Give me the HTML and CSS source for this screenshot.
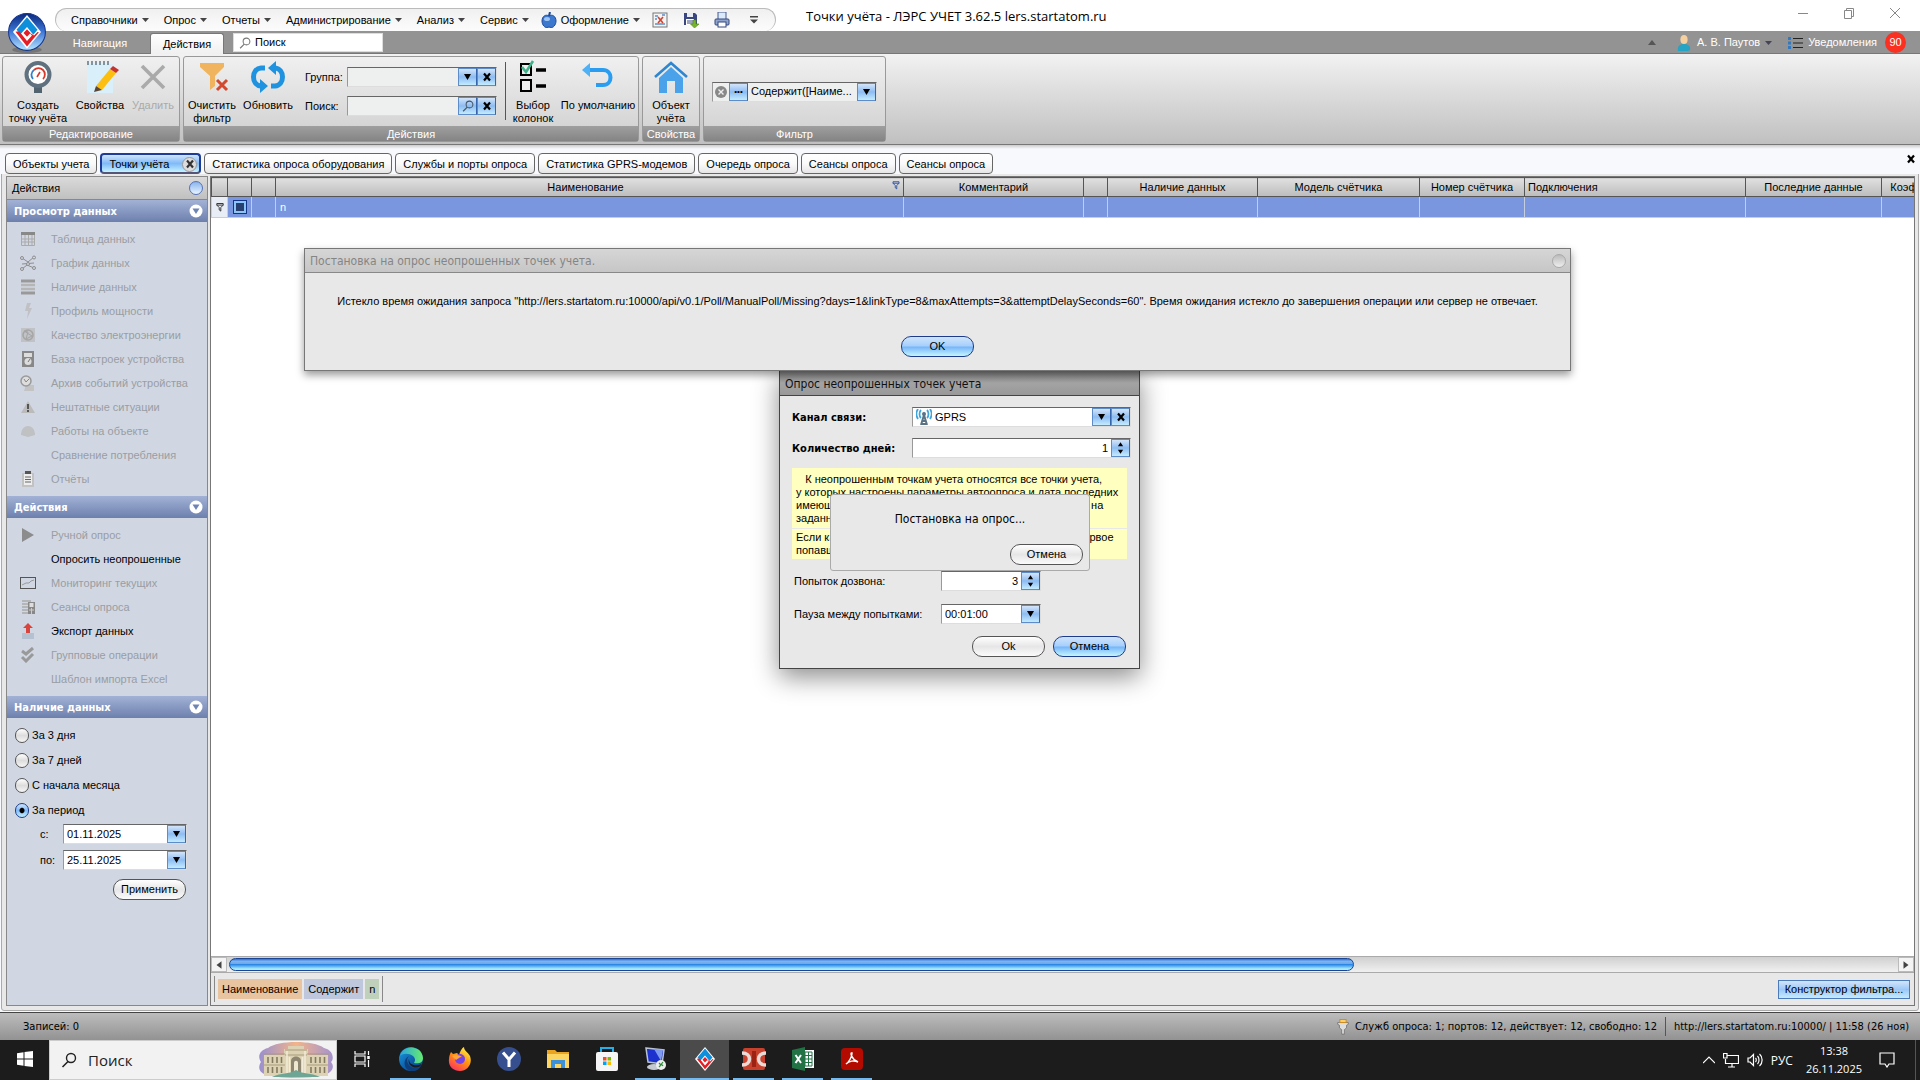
FILE: index.html
```
<!DOCTYPE html>
<html lang="ru">
<head>
<meta charset="utf-8">
	<title>Точки учёта - ЛЭРС УЧЕТ</title>
	<link rel="stylesheet" href="styles.css">
</head>
<body>
	<svg class="defs" aria-hidden="true">
		<defs>
			<linearGradient id="gBall" x1="0" y1="0" x2="0" y2="1">
				<stop offset="0" stop-color="#0a2a80"/><stop offset="0.5" stop-color="#3f78d8"/><stop offset="1" stop-color="#b8e6ff"/>
			</linearGradient>
			<linearGradient id="gEdge" x1="0" y1="0" x2="1" y2="1">
				<stop offset="0" stop-color="#1b9de2"/><stop offset="0.6" stop-color="#0c59a4"/><stop offset="1" stop-color="#114a8b"/>
			</linearGradient>
			<linearGradient id="gEdge2" x1="0" y1="0" x2="1" y2="0">
				<stop offset="0" stop-color="#2aa5dd"/><stop offset="1" stop-color="#66eb6e"/>
			</linearGradient>
			<linearGradient id="gFox" x1="0.8" y1="0" x2="0.2" y2="1">
				<stop offset="0" stop-color="#fff44f"/><stop offset="0.45" stop-color="#ff980e"/><stop offset="1" stop-color="#ff2d64"/>
			</linearGradient>
			<linearGradient id="gSky" x1="0" y1="0" x2="1" y2="0">
				<stop offset="0" stop-color="#9a8fd0"/><stop offset="0.5" stop-color="#f2b48a"/><stop offset="1" stop-color="#a493cf"/>
			</linearGradient>
			<symbol id="down" viewBox="0 0 10 6" preserveAspectRatio="none"><path d="M0 0H10L5 6Z"/></symbol>
			<symbol id="cross" viewBox="0 0 10 10"><path d="M2 1.500L8 8.500M8 1.500L2 8.500" fill="none" stroke="currentColor" stroke-width="2.200"/></symbol>
			<symbol id="loupe" viewBox="0 0 16 16"><circle cx="10" cy="6" r="4.500" fill="none" stroke="currentColor" stroke-width="1.400"/><path d="M7 9.500L1.500 15" stroke="currentColor" stroke-width="1.600"/></symbol>
			<symbol id="lers" viewBox="0 0 20 24">
				<path d="M10 0L20 12L10 24L0 12Z" fill="#fff"/>
				<path d="M10 1.500L17.500 10.500L14.500 14L10 8.500L5.500 13.500L2.500 10.500Z" fill="#0d8fdc"/>
				<path d="M1.800 11.800L4.500 11.500L10 18.500L13.500 14.500L10 10.500L12 12.500L15 14.500L17.500 12L18.500 12.300L10 22.300Z" fill="#e31e24"/>
				<path d="M10 10L12.500 12.800L10 15.500L7.500 12.800Z" fill="#e31e24"/>
			</symbol>
			<symbol id="updown" viewBox="0 0 8 13"><path d="M1 4.500L4 0L7 4.500ZM1 8.500H7L4 13Z"/></symbol>
			<symbol id="fold" viewBox="0 0 14 14"><circle cx="7" cy="7" r="6.500" fill="#fff"/><path d="M3.500 4.500H10.500L7 10Z" fill="#6f84b5"/></symbol>
			<symbol id="funnel" viewBox="0 0 10 12"><path d="M1 1H9V3L6 6V10.500L4 9V6L1 3ZM1 3H9" fill="none" stroke="currentColor" stroke-width="1.200"/></symbol>
		</defs>
	</svg>

	<header class="titlebar">
		<nav class="quick">
			<button class="menu-btn">Справочники <svg class="arr"><use href="#down"/></svg></button>
			<button class="menu-btn">Опрос <svg class="arr"><use href="#down"/></svg></button>
			<button class="menu-btn">Отчеты <svg class="arr"><use href="#down"/></svg></button>
			<button class="menu-btn">Администрирование <svg class="arr"><use href="#down"/></svg></button>
			<button class="menu-btn">Анализ <svg class="arr"><use href="#down"/></svg></button>
			<button class="menu-btn">Сервис <svg class="arr"><use href="#down"/></svg></button>
			<button class="menu-btn look">
				<svg class="ic16" viewBox="0 0 16 16"><path d="M8 4C5 2 1 4 1 9C1 13 4 16 6 15.500C7.500 15 8.500 15 10 15.500C12 16 15 13 15 9C15 4 11 2 8 4Z" fill="#3d78cf" stroke="#1f4a9a"/><path d="M8 4L9 0" stroke="#1f4a9a" stroke-width="2"/><ellipse cx="6" cy="7" rx="3" ry="2" fill="#9cc4f5"/></svg>
				Оформление <svg class="arr"><use href="#down"/></svg></button>
			<button class="tool-btn" title="Закрыть"><svg class="ic16" viewBox="0 0 16 16"><rect x="1" y="1" width="14" height="14" fill="#f4f4f4" stroke="#777"/><path d="M3 4H6M3 7H5M3 12H13M10 3H13" stroke="#5b8fc9" stroke-width="1.500"/><path d="M6 5L11 11M11 5L6 11" stroke="#d0432e" stroke-width="1.600"/></svg></button>
			<button class="tool-btn" title="Сохранить"><svg class="ic16" viewBox="0 0 16 16"><path d="M1 1H12L14 3V13H1Z" fill="#39467f"/><rect x="4" y="1" width="6" height="4" fill="#e8ecf7"/><rect x="3" y="7" width="8" height="6" fill="#fff"/><path d="M4 9H10M4 11H10" stroke="#39467f"/><path d="M10 8H13V12H16L11.500 16L7.500 12H10Z" fill="#76b52a" stroke="#4d8414" stroke-width="0.600"/></svg></button>
			<button class="tool-btn" title="Печать"><svg class="ic16" viewBox="0 0 16 16"><rect x="4" y="0" width="8" height="8" fill="#dce9fa" stroke="#44598f"/><rect x="1" y="7" width="14" height="6" rx="1" fill="#8fa5cd" stroke="#35497f"/><rect x="4" y="10" width="8" height="5" fill="#fff" stroke="#35497f"/></svg></button>
			<button class="tool-btn more" title="Настройка"><svg class="ic10" viewBox="0 0 10 8"><path d="M1 0H9V1.500H1ZM1 3.500H9L5 7.500Z" fill="#444"/></svg></button>
		</nav>
		<h1 class="caption">Точки учёта - ЛЭРС УЧЕТ 3.62.5 lers.startatom.ru</h1>
		<div class="win-btns">
			<button title="Свернуть"><svg viewBox="0 0 12 12"><path d="M1 6.500H11"/></svg></button>
			<button title="Окно"><svg viewBox="0 0 12 12"><path d="M1.500 3.500H8.500V11.500H1.500ZM3.500 3.500V1.500H10.500V9.500H8.500"/></svg></button>
			<button title="Закрыть"><svg viewBox="0 0 12 12"><path d="M1 1L11 11M11 1L1 11"/></svg></button>
		</div>
		<button class="logo" title="ЛЭРС УЧЕТ"><svg viewBox="0 0 36 38"><ellipse cx="18" cy="35" rx="14" ry="3" fill="#555" opacity="0.500"/><circle cx="18" cy="18" r="17.500" fill="url(#gBall)" stroke="#15348c"/><use href="#lers" x="2" y="2" width="32" height="32"/></svg></button>
	</header>

	<div class="pages">
		<button class="page">Навигация</button>
		<button class="page on">Действия</button>
		<label class="find"><svg class="ic12"><use href="#loupe"/></svg><input type="text" value="Поиск" aria-label="Поиск"></label>
		<div class="user">
			<button class="up" title="Свернуть ленту"><svg viewBox="0 0 8 5"><path d="M0 5L4 0L8 5Z" fill="#555"/></svg></button>
			<button class="who"><svg class="ic16" viewBox="0 0 14 16"><path d="M1 16C0 11 3 9 7 9S14 11 13 15C10 17 4 17 1 16Z" fill="#27a3c4"/><ellipse cx="7" cy="4.500" rx="3.600" ry="4.500" fill="#f6cf9f"/></svg> А. В. Паутов <svg class="arr"><use href="#down"/></svg></button>
			<button class="news"><svg class="ic16" viewBox="0 0 16 12"><path d="M6 1.500H16M6 6H16M6 10.500H16" stroke="#222" stroke-width="1.200"/><path d="M1 1.500H4M1 6H4M1 10.500H4" stroke="#3479bd" stroke-width="3"/></svg> Уведомления</button>
			<span class="badge">90</span>
		</div>
	</div>

	<section class="ribbon">
		<div class="group">
			<div class="cells">
				<button class="big w70"><svg viewBox="0 0 32 32"><path d="M12 24H20V32H12Z" fill="#51636f"/><circle cx="16" cy="13.500" r="11.500" fill="#fff" stroke="#5f707e" stroke-width="4"/><path d="M11 18A6 6 0 0 1 12 9" fill="none" stroke="#2f7fd0" stroke-width="1.800"/><path d="M12 9A6 6 0 0 1 21 18" fill="none" stroke="#d8392b" stroke-width="1.800"/><path d="M15 16L18 11" stroke="#d8392b" stroke-width="1.600"/></svg><span>Создать<br>точку учёта</span></button>
				<button class="big w54"><svg viewBox="0 0 32 32"><rect x="3" y="3" width="26" height="29" fill="#d9f0fb"/><path d="M4 0V4M8 0V4M12 0V4M16 0V4M20 0V4M24 0V4" stroke="#6b7d8c" stroke-width="1.600"/><path d="M12 25L26 8L32 12L18 29Z" fill="#fdbf0f"/><path d="M12 25L18 29L10 31Z" fill="#5a4636"/><path d="M26 8L29 5L35 9L32 12Z" fill="#c8322c"/></svg><span>Свойства</span></button>
				<button class="big w52" disabled><svg viewBox="0 0 32 32"><path d="M5 5L27 27M27 5L5 27" stroke="#aaa" stroke-width="3.600"/></svg><span>Удалить</span></button>
			</div>
			<h2>Редактирование</h2>
		</div>
		<div class="group">
			<div class="cells">
				<button class="big w56"><svg viewBox="0 0 32 32"><path d="M4 2H28V6L19 15V25L14 29V15L4 6Z" fill="#f0b45e"/><path d="M21 19L31 29M31 19L21 29" stroke="#d2492e" stroke-width="3"/></svg><span>Очистить фильтр</span></button>
				<button class="big w56"><svg viewBox="0 0 32 32"><path d="M13 7H9C-1 8 -1 24 9 25M19 25H23C33 24 33 8 23 7" fill="none" stroke="#2093e0" stroke-width="5"/><path d="M8 18V32L16 25ZM24 0V14L16 7Z" fill="#2093e0"/></svg><span>Обновить</span></button>
				<div class="fields">
					<label for="grp">Группа:</label>
					<div class="combo flat"><select id="grp"><option></option></select><span class="b"><svg class="arr"><use href="#down"/></svg></span><button class="b" title="Очистить"><svg class="ic10"><use href="#cross"/></svg></button></div>
					<label for="srch">Поиск:</label>
					<div class="combo flat"><input id="srch" type="text"><button class="b dim" title="Найти"><svg class="ic12"><use href="#loupe"/></svg></button><button class="b" title="Очистить"><svg class="ic10"><use href="#cross"/></svg></button></div>
				</div>
				<hr>
				<button class="big w50"><svg viewBox="0 0 32 32"><path d="M4 3H14V14H4ZM4 19H14V30H4Z" fill="#eee" stroke="#000" stroke-width="2"/><path d="M19 9H29M19 25H29" stroke="#000" stroke-width="3.500"/><path d="M5 6L9 11L16 0" fill="none" stroke="#3fb28c" stroke-width="2.600"/></svg><span>Выбор колонок</span></button>
				<button class="big w80"><svg viewBox="0 0 32 32"><path d="M5 9H21C31 9 31 24 21 24H14" fill="none" stroke="#2a9df0" stroke-width="4"/><path d="M0 9L8 2V16Z" fill="#4eb0f5"/></svg><span>По умолчанию</span></button>
			</div>
			<h2>Действия</h2>
		</div>
		<div class="group">
			<div class="cells">
				<button class="big w56"><svg viewBox="0 0 32 32"><path d="M16 6L28 17V32H20V20H12V32H4V17Z" fill="#4aa3ea"/><path d="M0 16L16 2L32 16" fill="none" stroke="#2f86d0" stroke-width="2.600"/></svg><span>Объект учёта</span></button>
			</div>
			<h2>Свойства</h2>
		</div>
		<div class="group">
			<div class="cells filter-cell">
				<div class="combo flat"><button class="clr" title="Сбросить"><svg class="ic12" viewBox="0 0 12 12"><circle cx="6" cy="6" r="6" fill="#888"/><path d="M3.500 3.500L8.500 8.500M8.500 3.500L3.500 8.500" stroke="#eee" stroke-width="1.400"/></svg></button><button class="b" title="Изменить">•••</button><select aria-label="Фильтр"><option>Содержит([Наиме...</option></select><span class="b"><svg class="arr"><use href="#down"/></svg></span></div>
			</div>
			<h2>Фильтр</h2>
		</div>
	</section>

	<div class="tabs">
		<button class="tab">Объекты учета</button>
		<div class="tab on"><button>Точки учёта</button><button class="x" title="Закрыть"><svg class="ic10"><use href="#cross"/></svg></button></div>
		<button class="tab">Статистика опроса оборудования</button>
		<button class="tab">Службы и порты опроса</button>
		<button class="tab">Статистика GPRS-модемов</button>
		<button class="tab">Очередь опроса</button>
		<button class="tab">Сеансы опроса</button>
		<button class="tab">Сеансы опроса</button>
		<button class="close-all" title="Закрыть"><svg class="ic10"><use href="#cross"/></svg></button>
	</div>

	<main class="frame">
		<aside class="side">
			<div class="side-head">Действия <button title="Скрыть панель"></button></div>

			<h3>Просмотр данных <button title="Свернуть"><svg><use href="#fold"/></svg></button></h3>
			<div class="list">
				<button class="item" disabled><svg viewBox="0 0 16 16"><path d="M1.500 4V14.500H14.500V4M1 8H15M1 11H15M5 4V14M8.500 4V14M12 4V14" fill="none" stroke="#aaa"/><path d="M1 1H15V4H1Z" fill="#888"/></svg>Таблица данных</button>
				<button class="item" disabled><svg viewBox="0 0 16 16"><path d="M2 3L8 7L14 2M2 14L7 10L14 13M2 9L14 8" fill="none" stroke="#8d8d8d"/><g fill="#d0d7e3" stroke="#8d8d8d"><circle cx="2" cy="3" r="1.500"/><circle cx="14" cy="2.500" r="1.500"/><circle cx="2" cy="14" r="1.500"/><circle cx="14" cy="13" r="1.500"/><circle cx="8" cy="9" r="1.500"/></g></svg>График данных</button>
				<button class="item" disabled><svg viewBox="0 0 16 16"><path d="M1 2H15M1 14H15" stroke="#999" stroke-width="3"/><path d="M1 6H15M1 10H15" stroke="#b5b5b5" stroke-width="2.500"/></svg>Наличие данных</button>
				<button class="item" disabled><svg viewBox="0 0 16 16"><path d="M7 0H11L9 5H12L7 16L8 8H5Z" fill="#bfc1c4"/></svg>Профиль мощности</button>
				<button class="item" disabled><svg viewBox="0 0 16 16"><rect x="1" y="1" width="14" height="14" fill="#c0c2c5"/><circle cx="8" cy="8" r="5" fill="none" stroke="#a5a5a5" stroke-width="1.500"/><path d="M4 4L12 9L6 12L8 5Z" fill="none" stroke="#a5a5a5"/></svg>Качество электроэнергии</button>
				<button class="item" disabled><svg viewBox="0 0 16 16"><rect x="2" y="0" width="12" height="16" fill="#888"/><rect x="4" y="2" width="8" height="4" fill="#ddd"/><circle cx="8" cy="10.500" r="3.500" fill="#ddd"/><path d="M8 11L10 8" stroke="#777"/></svg>База настроек устройства</button>
				<button class="item" disabled><svg viewBox="0 0 16 16"><path d="M6 10H14V16H4Z" fill="#c3c3c3"/><circle cx="6" cy="6" r="5" fill="#ddd" stroke="#999" stroke-width="1.500"/><path d="M4 4L6 7L9 4" fill="none" stroke="#888"/></svg>Архив событий устройства</button>
				<button class="item" disabled><svg viewBox="0 0 16 16"><path d="M8 2L15 14H1Z" fill="#bbb"/><path d="M8 5V10M8 11V13" stroke="#555" stroke-width="2"/></svg>Нештатные ситуации</button>
				<button class="item" disabled><svg viewBox="0 0 16 16"><path d="M1 12C1 0 15 0 15 12L8 14Z" fill="#c0c1c3"/></svg>Работы на объекте</button>
				<button class="item" disabled><svg viewBox="0 0 16 16"></svg>Сравнение потребления</button>
				<button class="item" disabled><svg viewBox="0 0 16 16"><rect x="2" y="2" width="12" height="14" fill="#c2c2c2"/><rect x="4" y="3" width="8" height="11" fill="#eee"/><path d="M5 0H11V3H5Z" fill="#555"/><path d="M5 6H11M5 8.500H11M5 11H11" stroke="#666"/></svg>Отчёты</button>
			</div>

			<h3>Действия <button title="Свернуть"><svg><use href="#fold"/></svg></button></h3>
			<div class="list">
				<button class="item" disabled><svg viewBox="0 0 16 16"><path d="M2 1L14 8L2 15Z" fill="#8c8c8c"/></svg>Ручной опрос</button>
				<button class="item"><svg viewBox="0 0 16 16"></svg>Опросить неопрошенные</button>
				<button class="item" disabled><svg viewBox="0 0 16 16"><rect x="0.500" y="2.500" width="15" height="11" fill="none" stroke="#555"/><path d="M2 10L6 8L9 8L11 6L14 5" fill="none" stroke="#999"/></svg>Мониторинг текущих</button>
				<button class="item" disabled><svg viewBox="0 0 16 16"><path d="M2 2H11M2 5H8M2 8H8M2 11H8M2 14H8" stroke="#aaa" stroke-width="1.500"/><rect x="8" y="3" width="7" height="12" fill="#888"/><rect x="9.500" y="4" width="4" height="4" fill="#ddd"/><path d="M9 11H14M11.500 9V15" stroke="#ccc"/></svg>Сеансы опроса</button>
				<button class="item"><svg viewBox="0 0 16 16"><rect x="2" y="10" width="12" height="6" fill="#b4c1d0"/><path d="M6 10V5H3L8 0L13 5H10V10Z" fill="#d9443c"/></svg>Экспорт данных</button>
				<button class="item" disabled><svg viewBox="0 0 16 16"><path d="M2 4L6 7L13 1M2 10L6 14L13 7" fill="none" stroke="#999" stroke-width="3"/></svg>Групповые операции</button>
				<button class="item" disabled><svg viewBox="0 0 16 16"></svg>Шаблон импорта Excel</button>
			</div>

			<h3>Наличие данных <button title="Свернуть"><svg><use href="#fold"/></svg></button></h3>
			<div class="list">
				<label class="rad"><input type="radio" name="per">За 3 дня</label>
				<label class="rad"><input type="radio" name="per">За 7 дней</label>
				<label class="rad"><input type="radio" name="per">С начала месяца</label>
				<label class="rad"><input type="radio" name="per" checked>За период</label>
				<div class="date"><label for="d1">с:</label><div class="combo"><input id="d1" type="text" value="01.11.2025"><button class="b" title="Календарь"><svg class="arr"><use href="#down"/></svg></button></div></div>
				<div class="date"><label for="d2">по:</label><div class="combo"><input id="d2" type="text" value="25.11.2025"><button class="b" title="Календарь"><svg class="arr"><use href="#down"/></svg></button></div></div>
				<button class="pill apply">Применить</button>
			</div>
		</aside>

		<section class="grid">
			<div class="rows">
				<table>
					<colgroup>
						<col class="c16"><col class="c24"><col class="c24"><col class="c628"><col class="c180"><col class="c24"><col class="c150"><col class="c162"><col class="c105"><col class="c221"><col class="c136"><col class="c60">
					</colgroup>
					<thead>
						<tr>
							<th></th><th></th><th></th>
							<th>Наименование<svg class="mark"><use href="#funnel"/></svg></th>
							<th>Комментарий</th>
							<th></th>
							<th>Наличие данных</th>
							<th>Модель счётчика</th>
							<th>Номер счётчика</th>
							<th class="left">Подключения</th>
							<th>Последние данные</th>
							<th>Коэффи</th>
						</tr>
					</thead>
					<tbody>
						<tr>
							<td class="ind"><svg><use href="#funnel"/></svg></td>
							<td class="chk"><input type="checkbox" aria-label="Отбор"></td>
							<td></td>
							<td>n</td>
							<td></td><td></td><td></td><td></td><td></td><td></td><td></td><td></td>
						</tr>
					</tbody>
				</table>
			</div>
			<div class="scroll">
				<button title="Влево"><svg viewBox="0 0 6 8"><path d="M5 1V7L1 4Z"/></svg></button>
				<div class="track"><div class="thumb"></div></div>
				<button title="Вправо"><svg viewBox="0 0 6 8"><path d="M1 1V7L5 4Z"/></svg></button>
			</div>
			<div class="expr">
				<div class="cond"><span class="f">Наименование</span><span class="o">Содержит</span><span class="v">n</span></div>
				<button class="builder">Конструктор фильтра...</button>
			</div>
		</section>
	</main>

	<footer class="status">
		<span>Записей: 0</span>
		<span class="srv"><svg class="ic16" viewBox="0 0 16 18"><path d="M2 4H14V6L12 7V10L9.500 12V17H6.500V12L4 10V7L2 6Z" fill="#ddd" stroke="#777"/><rect x="4.500" y="0.500" width="7" height="3.500" fill="#fbd06c" stroke="#c98a22"/></svg> Служб опроса: 1; портов: 12, действует: 12, свободно: 12</span>
		<span class="url">http://lers.startatom.ru:10000/ | 11:58 (26 ноя)</span>
	</footer>

	<div class="taskbar">
		<button class="app" title="Пуск"><svg viewBox="0 0 16 16"><path d="M0 2.200L6.500 1.300V7.500H0ZM7.500 1.100L16 0V7.500H7.500ZM0 8.500H6.500V14.700L0 13.800ZM7.500 8.500H16V16L7.500 14.900Z" fill="#fff"/></svg></button>
		<label class="tsearch"><svg class="ic16"><use href="#loupe"/></svg><input type="text" value="Поиск" aria-label="Поиск Windows">
			<svg class="palace" viewBox="0 0 76 36"><path d="M10 6C20 -2 56 -2 66 6C76 8 76 18 73 20C78 26 72 32 66 33C50 37 24 37 10 33C2 32 -1 26 3 20C-1 14 2 8 10 6Z" fill="url(#gSky)"/><path d="M6 13H26V7H30V4H46V7H50V13H70V34H6Z" fill="#ddd3b4"/><path d="M5 12H27M49 12H71M27 8H49M27 13H49M6 23H27M49 23H70" stroke="#a79b78" stroke-width="1"/><path d="M33 33V19C33 13 43 13 43 19V33Z" fill="#8e8670"/><path d="M36 30V21C36 18 40 18 40 21V30Z" fill="#efe8d0"/><path d="M10 15V21M14.500 15V21M19 15V21M23.500 15V21M53 15V21M57.500 15V21M62 15V21M66.500 15V21M10 25V31M14.500 25V31M19 25V31M23.500 25V31M53 25V31M57.500 25V31M62 25V31M66.500 25V31" stroke="#837a60" stroke-width="1.600"/><path d="M29 9V33M47 9V33M31.500 15V33M44.500 15V33" stroke="#f2ecd8" stroke-width="1.500"/><path d="M14 35C24 30 30 33 38 28C46 33 52 30 62 35Z" fill="#6fa595"/></svg>
		</label>
		<button class="app" title="Представление задач"><svg viewBox="0 0 16 16" fill="none" stroke="#fff" stroke-width="1.200"><path d="M1 0V3H11V0M1 16V13H11V16M1 5H11V11H1ZM14.500 0V4M14.500 9V16"/><path d="M14.500 5V8" stroke-width="2.500"/></svg></button>
		<button class="app run" title="Edge"><svg class="l" viewBox="0 0 24 24"><circle cx="12" cy="12" r="12" fill="url(#gEdge)"/><path d="M1 9C4 -3 23 -2 24 11C24 16 19 17 15 16C16 14 17 12 14 9C10 6 4 6 1 9Z" fill="url(#gEdge2)"/><path d="M10 9C6 13 9 20 15 21C18 21.500 20 21 22 19C18 26 10 25 7 21C4 16 6 11 10 9Z" fill="#0e3f7c"/><path d="M10 12C10 17 14 19 20 18L22.500 17C21 21 17 21 14 20C10 18 9 15 10 12Z" fill="#1c1c1c"/></svg></button>
		<button class="app" title="Firefox"><svg class="l" viewBox="0 0 24 24"><path d="M3 5L5 7L9 6L11 8C12 4 14 1 16 0C16 4 20 5 22 9C25 17 19 24 12 24C5 24 0 19 1 12C1 9 2 7 3 5Z" fill="url(#gFox)"/><circle cx="12" cy="12" r="5" fill="#7542e5"/><path d="M4 9C8 7 12 8 14 10C11 10 10 12 8 13Z" fill="#ffa436"/></svg></button>
		<button class="app" title="Яндекс"><svg class="l" viewBox="0 0 24 24"><circle cx="12" cy="12" r="12" fill="#36508f"/><path d="M6 5.500L12 12.500L18 5.500M12 12V20" fill="none" stroke="#fff" stroke-width="3"/></svg></button>
		<button class="app" title="Проводник"><svg class="l" viewBox="0 0 24 24"><path d="M1 3H9L11 5H23V21H1Z" fill="#e9a522"/><path d="M1 7H23V21H1Z" fill="#fcd462"/><path d="M5 21V13H19V21H15V17H9V21Z" fill="#3c91d9"/></svg></button>
		<button class="app" title="Магазин"><svg class="l" viewBox="0 0 24 24"><path d="M6 6V1H18V6" fill="none" stroke="#22b0ea" stroke-width="2"/><rect x="1" y="5" width="22" height="19" rx="2" fill="#f5f5f5"/><path d="M8 10H11.500V13.500H8Z" fill="#f25022"/><path d="M12.500 10H16V13.500H12.500Z" fill="#7fba00"/><path d="M8 14.500H11.500V18H8Z" fill="#00a4ef"/><path d="M12.500 14.500H16V18H12.500Z" fill="#ffb900"/></svg></button>
		<button class="app run" title="Удаленный рабочий стол"><svg class="l" viewBox="0 0 24 24"><path d="M2 1L20 3L18 17L4 15Z" fill="#1d31cf" stroke="#b9c3d6" stroke-width="1.500"/><path d="M10 2L19 3L17 14Z" fill="#7f9bf0"/><ellipse cx="10" cy="20" rx="7" ry="3" fill="#c5cad2"/><circle cx="17" cy="18" r="5" fill="#eee"/><path d="M15 16L17 18L15 20M19 15L17.500 17L19 19" fill="none" stroke="#2b8c38" stroke-width="1.200"/></svg></button>
		<button class="app run cur" title="ЛЭРС УЧЕТ"><svg class="l"><use href="#lers"/></svg></button>
		<button class="app run" title="DC"><svg class="l" viewBox="0 0 24 24"><rect x="1" y="1" width="22" height="22" rx="2" fill="#c8412d"/><path d="M12 4V20" stroke="#9c2213" stroke-width="4"/><path d="M0 6C10 6 10 18 0 18M24 6C14 6 14 18 24 18" fill="none" stroke="#e9dcd8" stroke-width="3.500"/></svg></button>
		<button class="app run" title="Excel"><svg class="l" viewBox="0 0 24 24"><rect x="12" y="3" width="11" height="18" fill="#fff"/><path d="M14 5H21V19H14ZM14 8.500H21M14 12H21M14 15.500H21M17.500 5V19" fill="none" stroke="#217346"/><path d="M1 3L14 0V24L1 21Z" fill="#217346"/><path d="M4.500 8L10 16M10 8L4.500 16" stroke="#fff" stroke-width="2"/></svg></button>
		<button class="app run" title="Acrobat"><svg class="l" viewBox="0 0 24 24"><rect x="1" y="1" width="22" height="22" rx="4" fill="#b30b00"/><path d="M6 17C9 15 12 10 12 6C10 5 11 12 18 15C14 13 9 14 6 17Z" fill="none" stroke="#fff" stroke-width="1.500"/></svg></button>
		<div class="tray">
			<svg class="ic12" viewBox="0 0 12 12"><path d="M0 9L6 3L12 9"/></svg>
			<svg class="ic16" viewBox="0 0 16 16"><path d="M4 3.500H15.500V11.500H2.500V7M0.500 1.500H4V6H0.500ZM9 12V15M5 15H12"/></svg>
			<svg class="ic16" viewBox="0 0 16 16"><path d="M1 6H3L6.500 2.500V13.500L3 10H1ZM8.500 6C9.500 7 9.500 9 8.500 10M10.500 4C12.500 6 12.500 10 10.500 12M12.500 2C16 5 16 11 12.500 14"/></svg>
			<span>РУС</span>
			<div class="clock">13:38<br>26.11.2025</div>
			<svg class="ic16" viewBox="0 0 16 16"><path d="M1 1H15V12H10L8 15L6 12H1Z"/></svg>
		</div>
	</div>

	<section class="win params" role="dialog" aria-labelledby="t1">
		<h2 id="t1">Опрос неопрошенных точек учета</h2>
		<div class="form">
			<label class="bold" for="chan">Канал связи:</label>
			<div class="combo">
				<svg class="ic16" viewBox="0 0 16 16"><path d="M5 16L8 6L11 16M6 12H10M5 15H11" fill="none" stroke="#5a7285" stroke-width="2"/><circle cx="8" cy="5" r="2" fill="#5a7285"/><path d="M5 1C3 3 3 7 5 9M2 0C0 3 0 7 2 10M11 1C13 3 13 7 11 9M14 0C16 3 16 7 14 10" fill="none" stroke="#3fa3dc" stroke-width="1.800"/></svg>
				<select id="chan"><option>GPRS</option></select><span class="b"><svg class="arr"><use href="#down"/></svg></span><button class="b" title="Очистить"><svg class="ic10"><use href="#cross"/></svg></button>
			</div>
			<label class="bold" for="days">Количество дней:</label>
			<div class="combo num"><input id="days" type="text" value="1"><button class="b" title="Изменить"><svg class="ud"><use href="#updown"/></svg></button></div>
		</div>
		<div class="hint">
			<p>&nbsp;&nbsp; К неопрошенным точкам учета относятся все точки учета,<br>у которых настроены параметры автоопроса и дата последних<br>имеющихся данных отстают от текущей даты более, чем на<br>заданное количество дней.</p>
			<p>Если канал связи не выбран, то будет использоваться первое<br>попавшееся подключение.</p>
		</div>
		<div class="form small">
			<label for="tries">Попыток дозвона:</label>
			<div class="combo num"><input id="tries" type="text" value="3"><button class="b" title="Изменить"><svg class="ud"><use href="#updown"/></svg></button></div>
			<label for="pause">Пауза между попытками:</label>
			<div class="combo"><input id="pause" type="text" value="00:01:00"><button class="b" title="Выбрать"><svg class="arr"><use href="#down"/></svg></button></div>
		</div>
		<div class="btns"><button class="pill">Ok</button><button class="pill blue">Отмена</button></div>
		<div class="wait">
			<p>Постановка на опрос...</p>
			<button class="pill">Отмена</button>
		</div>
	</section>

	<section class="win error" role="alertdialog" aria-labelledby="t2">
		<h2 id="t2">Постановка на опрос неопрошенных точек учета. <button class="ball" title="Закрыть"></button></h2>
		<p>Истекло время ожидания запроса "http://lers.startatom.ru:10000/api/v0.1/Poll/ManualPoll/Missing?days=1&amp;linkType=8&amp;maxAttempts=3&amp;attemptDelaySeconds=60". Время ожидания истекло до завершения операции или сервер не отвечает.</p>
		<button class="pill blue">OK</button>
	</section>
</body>
</html>
```
FILE: styles.css
```
*{
	box-sizing: border-box;
}
body{
	margin: 0px;
	height: 100vh;
	display: flex;
	flex-direction: column;
	overflow: hidden;
	position: relative;
	background-color: #f8f9fc;
	color: #000;
	font-family: "Liberation Sans", Arial, sans-serif;
	font-size: 11px;
	line-height: 13px;
}
button, input, select{
	font: inherit;
	color: inherit;
	margin: 0px;
	padding: 0px;
	border: 0px;
	background: none;
}
h1, h2, h3, p{
	margin: 0px;
	font-size: inherit;
	font-weight: normal;
}
svg{
	flex: none;
}
.defs{
	position: absolute;
	width: 0px;
	height: 0px;
}
.ic16{
	width: 16px;
	height: 16px;
}
.ic12{
	width: 12px;
	height: 12px;
}
.ic10{
	width: 10px;
	height: 10px;
}
.arr{
	width: 7px;
	height: 4px;
}

/* title bar */
.titlebar{
	display: flex;
	height: 31px;
	padding-left: 55px;
	background-color: #fff;
	position: relative;
}
.quick{
	display: flex;
	align-items: center;
	height: 23px;
	width: 721px;
	margin-top: 8px;
	padding: 0px 15px;
	border: 1px solid #bbb;
	border-bottom: 0px;
	border-radius: 14px;
	background: linear-gradient(#f0f0f0, #fcfcfc);
}
.menu-btn{
	display: flex;
	align-items: center;
	gap: 4px;
	margin-right: 15px;
	white-space: nowrap;
}
.menu-btn .arr{
	fill: #444;
}
.quick .look{
	margin: 0px 12px 0px -3px;
}
.tool-btn{
	display: flex;
	width: 16px;
	margin-right: 15px;
}
.more{
	margin: 0px 0px 0px 4px;
}
.caption{
	margin: 5px 0px 0px 30px;
	font-family: "Open Sans", "Noto Sans", sans-serif;
	font-size: 13px;
	line-height: 22px;
}
.win-btns{
	display: flex;
	margin-left: auto;
	margin-right: 2px;
}
.win-btns button{
	width: 46px;
	height: 28px;
}
.win-btns svg{
	width: 12px;
	height: 12px;
	fill: none;
	stroke: #888;
}
.logo{
	position: absolute;
	left: 8px;
	top: 13px;
	width: 38px;
	height: 40px;
}
.logo svg{
	width: 38px;
	height: 40px;
}

/* ribbon */
.pages{
	display: flex;
	align-items: flex-end;
	height: 23px;
	padding-left: 50px;
	background-color: #939393;
	border-bottom: 1px solid #777;
	color: #fff;
}
.page{
	width: 100px;
	height: 20px;
}
.page.on{
	width: 74px;
	height: 21px;
	margin-bottom: -1px;
	border: 1px solid #777;
	border-bottom: 0px;
	border-radius: 3px 3px 0px 0px;
	background: linear-gradient(#fff, #f0f0f0);
	color: #000;
}
.find{
	display: flex;
	align-items: center;
	gap: 4px;
	width: 150px;
	height: 19px;
	margin: 0px 0px 1px 9px;
	padding-left: 5px;
	background-color: #fff;
	border: 1px solid #ddd;
	color: #000;
}
.find svg{
	color: #777;
}
.find input{
	width: 120px;
}
.user{
	display: flex;
	align-items: center;
	height: 21px;
	margin-left: auto;
	padding-right: 14px;
}
.user button{
	display: flex;
	align-items: center;
	gap: 5px;
}
.user .arr{
	fill: #445;
}
.up svg{
	width: 8px;
	height: 5px;
}
.who{
	margin-left: 20px;
}
.news{
	margin: 0px 8px 0px 15px;
}
.badge{
	width: 21px;
	height: 21px;
	border-radius: 50%;
	background-color: #fc3020;
	line-height: 21px;
	text-align: center;
}
.ribbon{
	display: flex;
	gap: 3px;
	height: 91px;
	padding: 2px;
	background: linear-gradient(#f2f2f2, #c0c0c0);
	border-bottom: 1px solid #777;
}
.group{
	display: flex;
	flex-direction: column;
	height: 86px;
	border: 1px solid #999;
	border-radius: 3px;
	background: linear-gradient(#f0f0f0, #cfcfcf);
}
.group h2{
	height: 15px;
	background: linear-gradient(#9f9f9f, #848484);
	color: #fff;
	line-height: 16px;
	text-align: center;
	white-space: nowrap;
}
.cells{
	display: flex;
	flex: 1;
}
.big{
	display: flex;
	flex-direction: column;
	align-items: center;
	padding-top: 4px;
	gap: 6px;
}
.big svg{
	width: 32px;
	height: 32px;
	overflow: visible;
}
.big:disabled{
	color: #aaa;
}
.w50{
	width: 50px;
}
.w52{
	width: 52px;
}
.w54{
	width: 54px;
}
.w56{
	width: 56px;
}
.w70{
	width: 70px;
}
.w80{
	width: 80px;
	white-space: nowrap;
}
.fields{
	display: grid;
	grid-template-columns: 42px 150px;
	align-content: start;
	align-items: center;
	row-gap: 9px;
	padding: 10px 8px 0px 9px;
}
.cells hr{
	width: 1px;
	height: 58px;
	margin: 5px 2px 0px 0px;
	border: 0px;
	background-color: #555;
}
.filter-cell{
	align-items: center;
	padding: 0px 8px;
}
.filter-cell .combo{
	width: 165px;
	padding-left: 2px;
}
.filter-cell select{
	padding-left: 3px;
}
.clr{
	display: flex;
	align-items: center;
	width: 14px;
}

/* edit boxes */
.combo{
	display: flex;
	align-items: stretch;
	height: 20px;
	border: 1px solid #ddd;
	border-top-color: #666;
	border-left-color: #999;
	background-color: #fff;
}
.flat{
	background-color: #eef0f0;
}
.combo input, .combo select{
	flex: 1;
	min-width: 0px;
	width: 100%;
	padding-left: 3px;
	appearance: none;
}
.combo > svg{
	margin: 1px 0px 0px 3px;
}
.b{
	display: flex;
	flex: none;
	align-items: center;
	justify-content: center;
	width: 19px;
	border: 1px solid #5d8cc8;
	border-right-color: #3565ad;
	background: linear-gradient(#d3e4fa, #8dbcf2 50%, #c4ebff);
	font-size: 8px;
}
.b .arr{
	width: 7px;
	height: 6px;
}
.dim{
	color: #456;
}
.num input{
	text-align: right;
	padding-right: 3px;
}
.ud{
	width: 7px;
	height: 12px;
}

/* tabs */
.tabs{
	display: flex;
	align-items: flex-end;
	gap: 3px;
	height: 29px;
	padding: 0px 4px 0px 5px;
	position: relative;
	z-index: 1;
	background: linear-gradient(#ccc, #f8f9fc 4px);
}
.tab{
	display: flex;
	align-items: center;
	height: 21px;
	padding: 1px 7px 0px 7px;
	border: 1px solid #666;
	border-radius: 4px;
	background: linear-gradient(#fff, #fafafa 50%, #e6e6e6);
	white-space: nowrap;
}
.tab.on{
	gap: 13px;
	padding-right: 2px;
	border: 2px solid #1d3c9a;
	border-bottom-color: #557;
	background: linear-gradient(#cfe4fc, #80baf8 50%, #c4f2ff);
}
.x{
	display: flex;
	align-items: center;
	justify-content: center;
	width: 15px;
	height: 15px;
	border: 1px solid #999;
	border-radius: 50%;
	background-color: #ddd;
	color: #333;
}
.close-all{
	display: flex;
	margin: 0px 0px 10px auto;
}
.frame{
	display: flex;
	flex: 1;
	gap: 2px;
	min-height: 0px;
	margin: -4px 1px 1px 1px;
	padding: 5px 3px 4px 4px;
	border: 1px solid #aaa;
	border-radius: 3px;
	background-color: #e8e8e8;
}

/* left panel */
.side{
	width: 202px;
	flex: none;
	border: 1px solid #888;
	background-color: #d0d7e3;
}
.side-head{
	display: flex;
	align-items: center;
	justify-content: space-between;
	height: 23px;
	padding: 0px 4px 0px 5px;
	border-bottom: 1px solid #888;
	background: linear-gradient(#dadada, #c0c0c0);
}
.side-head button{
	width: 14px;
	height: 14px;
	border: 1px solid #5573b5;
	border-radius: 50%;
	background: linear-gradient(#8ab4ee, #e8f4ff);
}
.side h3{
	display: flex;
	align-items: center;
	justify-content: space-between;
	height: 22px;
	padding: 0px 4px 0px 7px;
	background: linear-gradient(#a2b2d6, #6d80ad);
	color: #fff;
	font-family: "DejaVu Sans Condensed", "Noto Sans", sans-serif;
	font-weight: bold;
}
.side h3 button, .side h3 svg{
	display: block;
	width: 14px;
	height: 14px;
}
.list{
	padding: 5px 0px;
}
.item{
	display: flex;
	align-items: center;
	gap: 15px;
	width: 100%;
	height: 24px;
	padding-left: 13px;
}
.item svg{
	width: 16px;
	height: 16px;
}
.item:disabled{
	color: #9a9da2;
}
.rad{
	display: flex;
	align-items: center;
	gap: 3px;
	height: 25px;
	padding-left: 8px;
}
.rad input{
	appearance: none;
	width: 14px;
	height: 15px;
	border: 1px solid #555;
	border-radius: 7px;
	background: linear-gradient(#fff, #ddd 50%, #f6f6f6);
}
.rad input:checked{
	border-color: #1d3c8a;
	background: radial-gradient(#000 2px, transparent 3px), linear-gradient(#cfe4fc, #80baf8 50%, #c4f2ff);
}
.date{
	display: flex;
	align-items: flex-start;
	height: 26px;
	padding: 1px 0px 0px 33px;
	line-height: 20px;
}
.date label{
	width: 23px;
}
.date .combo{
	width: 124px;
}
.pill{
	display: block;
	width: 73px;
	height: 21px;
	border: 1px solid #555;
	border-radius: 10px;
	background: linear-gradient(#fff, #e6e6e6 50%, #fbfbfb);
}
.pill.blue{
	border-color: #1d3c8a;
	background: linear-gradient(#cfe4fc, #a5cffb 48%, #76b4f8 52%, #c4f6ff);
}
.apply{
	margin: 4px 0px 0px 106px;
}

/* table */
.grid{
	display: flex;
	flex: 1;
	flex-direction: column;
	min-width: 0px;
	border: 1px solid #777;
	background-color: #e8e8e8;
}
.rows{
	flex: 1;
	overflow: hidden;
	background-color: #fff;
}
table{
	width: 1730px;
	table-layout: fixed;
	border-collapse: collapse;
}
.c16{
	width: 16px;
}
.c24{
	width: 24px;
}
.c60{
	width: 60px;
}
.c105{
	width: 105px;
}
.c136{
	width: 136px;
}
.c150{
	width: 150px;
}
.c162{
	width: 162px;
}
.c180{
	width: 180px;
}
.c221{
	width: 221px;
}
.c628{
	width: 628px;
}
th{
	height: 19px;
	padding: 0px 3px;
	border: 1px solid #555;
	background: linear-gradient(#e0e0e0, #bcbcbc);
	font-weight: normal;
	white-space: nowrap;
	overflow: hidden;
}
th.left{
	text-align: left;
}
.mark{
	float: right;
	width: 8px;
	height: 9px;
	color: #2a4f9e;
}
td{
	height: 21px;
	padding: 0px 4px;
	border: 1px solid #c5cde0;
	background-color: #7a96de;
	color: #fff;
}
.ind{
	padding: 0px;
	background-color: #e8edf6;
	color: #333;
	text-align: center;
}
.ind svg{
	display: block;
	width: 8px;
	height: 11px;
	margin: 0px auto;
}
.chk{
	padding: 0px;
}
.chk input{
	display: block;
	appearance: none;
	width: 14px;
	height: 14px;
	margin: 0px auto;
	border: 1px solid #15358c;
	background-color: #263f70;
	box-shadow: inset 0px 0px 0px 2px #8cc4f8;
}
.scroll{
	display: flex;
	height: 17px;
	border: 1px solid #aaa;
	border-width: 1px 0px;
	background: linear-gradient(#d0d0d0, #f0f0f0);
}
.scroll button{
	width: 16px;
	border: 1px solid #bbb;
	background-color: #f4f4f4;
}
.scroll button svg{
	display: block;
	width: 8px;
	height: 10px;
	margin: 0px auto;
	fill: #444;
}
.track{
	flex: 1;
	padding: 1px 2px;
}
.thumb{
	width: 67.5%;
	height: 13px;
	border: 1px solid #1a4596;
	border-radius: 7px;
	background: linear-gradient(#2b6fd6, #7fb4ee 20%, #6ba7ea 45%, #2b86e6 50%, #a8ecff 90%);
}
.expr{
	display: flex;
	align-items: center;
	justify-content: space-between;
	height: 32px;
	padding: 0px 4px 0px 3px;
}
.cond{
	display: flex;
	gap: 2px;
	padding: 3px;
	border-left: 1px solid #888;
	border-right: 1px solid #888;
}
.cond span{
	padding: 3px 4px;
	line-height: 14px;
}
.f{
	background-color: #e8c5a0;
}
.o{
	background-color: #bfc7dc;
}
.v{
	background-color: #bfd0bb;
}
.builder{
	width: 132px;
	height: 19px;
	border: 1px solid #4c7bbb;
	background: linear-gradient(#d3e4fa, #9cc8f8 50%, #c4ebff);
	white-space: nowrap;
}

/* bottom */
.status{
	display: flex;
	align-items: center;
	height: 28px;
	padding: 0px 11px 0px 23px;
	border-top: 1px solid #444;
	background: linear-gradient(#bdbdbd, #929292);
	font-family: "DejaVu Sans Condensed", "Noto Sans", sans-serif;
}
.srv{
	display: flex;
	align-items: center;
	gap: 4px;
	margin-left: auto;
}
.url{
	margin-left: 8px;
	padding: 3px 0px 3px 8px;
	border-left: 1px solid #555;
}
.taskbar{
	display: flex;
	height: 40px;
	background-color: #1c1c1c;
	color: #fff;
	font-family: "Open Sans", "Noto Sans", sans-serif;
	font-size: 12px;
}
.app{
	display: flex;
	align-items: center;
	justify-content: center;
	width: 49px;
	border-bottom: 2px solid transparent;
}
.app svg{
	width: 16px;
	height: 16px;
}
.app svg.l{
	width: 24px;
	height: 24px;
}
.run{
	width: 41px;
	margin: 0px 4px;
	border-bottom-color: #76b9ed;
}
.cur{
	width: 49px;
	margin: 0px;
	background-color: #4b4b4b;
}
.tsearch{
	display: flex;
	align-items: center;
	width: 288px;
	padding: 0px 2px 0px 11px;
	border: 1px solid #ccc;
	background-color: #f2f2f2;
	color: #222;
}
.tsearch input{
	flex: 1;
	min-width: 0px;
	padding-left: 11px;
	font-size: 15px;
}
.palace{
	width: 76px;
	height: 36px;
}
.tray{
	display: flex;
	align-items: center;
	gap: 8px;
	margin-left: auto;
	margin-right: 4px;
	padding-right: 20px;
	border-right: 1px solid #555;
}
.tray svg{
	fill: none;
	stroke: #fff;
	stroke-width: 1.2;
}
.clock{
	margin: 0px 9px 0px 5px;
	font-size: 11px;
	line-height: 18px;
	text-align: center;
}

/* windows */
.win{
	position: absolute;
	background-color: #e8e8e8;
	border: 1px solid #777;
}
.win h2{
	display: flex;
	align-items: center;
	justify-content: space-between;
	height: 24px;
	padding: 1px 4px 0px 5px;
	font-family: "DejaVu Sans Condensed", "Noto Sans", sans-serif;
	font-size: 12px;
}
.error{
	left: 304px;
	top: 248px;
	width: 1267px;
	padding-bottom: 13px;
	box-shadow: 0px 4px 8px rgba(0, 0, 0, 0.4);
	text-align: center;
}
.error h2{
	border-bottom: 1px solid #888;
	background: linear-gradient(#d6d6d6, #c6c6c6);
	color: #858585;
}
.error p{
	margin: 22px 0px 28px 0px;
}
.error .pill{
	margin: 0px auto;
}
.ball{
	width: 14px;
	height: 14px;
	border: 1px solid #aaa;
	border-radius: 50%;
	background: linear-gradient(#bbb, #eee);
}
.params{
	left: 779px;
	top: 370px;
	width: 361px;
	padding-bottom: 11px;
	border-color: #444;
	box-shadow: 0px 8px 24px rgba(0, 0, 0, 0.45);
}
.params h2{
	height: 25px;
	padding: 2px 4px 0px 5px;
	border-bottom: 1px solid #444;
	background: linear-gradient(#808080, #a4a4a4 50%, #989898);
	color: #111;
}
.form{
	display: grid;
	grid-template-columns: 120px 219px;
	align-items: center;
	row-gap: 11px;
	padding: 11px 0px 0px 12px;
}
.bold{
	font-family: "DejaVu Sans Condensed", "Noto Sans", sans-serif;
	font-weight: bold;
}
.small{
	grid-template-columns: 147px 100px;
	row-gap: 13px;
	padding: 12px 0px 0px 14px;
}
.hint{
	display: flex;
	flex-direction: column;
	gap: 1px;
	width: 335px;
	margin: 10px 0px 0px 12px;
}
.hint p{
	padding: 2px 4px;
	background-color: #ffffc0;
	white-space: nowrap;
}
.hint p:first-child{
	padding: 5px 4px 3px 4px;
}
.btns{
	display: flex;
	gap: 8px;
	justify-content: flex-end;
	padding: 12px 13px 0px 0px;
}
.wait{
	position: absolute;
	left: 50px;
	top: 123px;
	width: 260px;
	padding: 18px 6px 5px 6px;
	border: 1px solid #aaa;
	border-radius: 3px;
	background-color: #e8e8e8;
	text-align: center;
}
.wait p{
	margin-bottom: 18px;
	font-family: "DejaVu Sans Condensed", "Noto Sans", sans-serif;
	font-size: 12px;
}
.wait .pill{
	margin-left: auto;
}
```
